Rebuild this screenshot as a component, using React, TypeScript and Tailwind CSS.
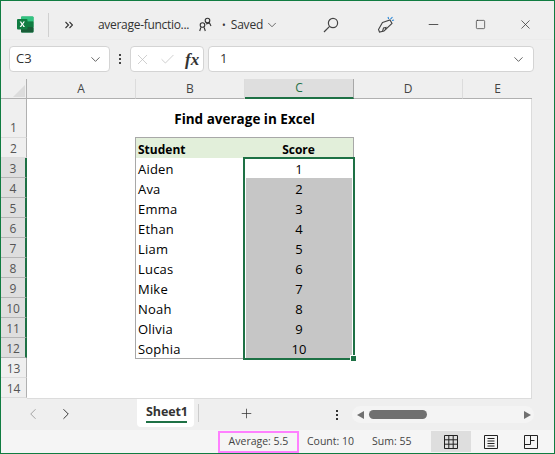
import React from "react";
import { ChevronDown, X, Check, Plus, ChevronLeft, ChevronRight, Minus, Square } from "lucide-react";

const ui = { fontFamily: '"Open Sans", "Noto Sans", sans-serif' };
const rows: [string, string][] = [
  ["Aiden", "1"], ["Ava", "2"], ["Emma", "3"], ["Ethan", "4"], ["Liam", "5"],
  ["Lucas", "6"], ["Mike", "7"], ["Noah", "8"], ["Olivia", "9"], ["Sophia", "10"],
];

function ExcelLogo() {
  return (
    <svg width="17" height="17" viewBox="0 0 17 17">
      <rect x="4" y="0.5" width="12.5" height="16" rx="1" fill="#21a366" />
      <rect x="4" y="0.5" width="12.5" height="5" rx="1" fill="#33c481" />
      <rect x="10" y="5.5" width="6.5" height="5.5" fill="#107c41" />
      <rect x="4" y="11" width="12.5" height="5.5" rx="1" fill="#185c37" />
      <rect x="0" y="3" width="10.5" height="10.5" rx="1" fill="#107c41" />
      <path d="M2.6 5.4h1.6l1.1 2 1.1-2h1.5L6.1 8.2l1.9 2.9H6.4L5.3 9.1l-1.1 2H2.6l1.9-2.9z" fill="#fff" />
    </svg>
  );
}

function Party() {
  return (
    <svg width="18" height="18" viewBox="0 0 18 18" fill="none" stroke="#444" strokeWidth="1.1">
      <path d="M5.5 6.5 L13 4 L15 7.5 L7 15 L2.5 16 L1.5 13.5 Z" />
      <path d="M5.5 15.5 L6.5 12 L9 11.5 L8.5 13.5" />
      <path d="M11 1 L11.7 3 M15.5 1 L13.5 3.2 M17 4 L15 4.5" stroke="#2b88d8" />
    </svg>
  );
}

function ColHead({ label, active, w, last }: { label: string; active?: boolean; w: string; last?: boolean }) {
  return (
    <div className={`${w} flex items-center justify-center text-[12px] ${active ? "bg-[#dedede] border-b-2 border-b-[#1e7145] text-[#1e7145] border-r border-r-[#a8a8a8]" : "border-b border-b-[#b0b0b0] text-[#444]"} ${last || active ? "" : "border-r border-r-[#dcdcdc]"}`}>
      {label}
    </div>
  );
}

function RowHead({ n, active, tall }: { n: number; active?: boolean; tall?: boolean }) {
  return (
    <div className={`${tall ? "h-[39px] items-end" : "h-5 items-center pt-[2px]"} flex justify-center text-[12px] text-[#555] border-b ${active ? "bg-[#dedede] border-b-[#b5b5b5] border-r-2 border-r-[#1e7145]" : "border-b-[#dcdcdc] border-r border-r-[#b0b0b0]"}`}>
      {n}
    </div>
  );
}

export default function App() {
  return (
    <div className="w-[555px] h-[454px] overflow-hidden border border-[#107c41] bg-[#efefef] flex flex-col text-[#333]" style={ui}>
      {/* Title bar */}
      <div className="h-[39px] shrink-0 flex items-center pt-[9px] border-b border-[#ebebeb] text-[12px] text-[#333]">
        <div className="ml-[16px] w-[17px]"><ExcelLogo /></div>
        <div className="ml-[14px] h-[24px] w-px bg-[#d0d0d0]" />
        <svg className="ml-[16px]" width="8" height="8" viewBox="0 0 8 8" fill="none" stroke="#333" strokeWidth="1.1">
          <path d="M.5 1l3 3-3 3M4.5 1l3 3-3 3" />
        </svg>
        <span className="ml-[25px] w-[94px] whitespace-nowrap tracking-[-0.3px]">average-functio...</span>
        <svg className="ml-[7px]" width="14" height="15" viewBox="0 0 14 15" fill="none" stroke="#333" strokeWidth="1.1">
          <circle cx="8.5" cy="3.5" r="2.3" /><circle cx="3.5" cy="8" r="2.3" />
          <path d="M.7 14 L1.8 10.5 M5.2 10.5 L6.3 14 M7 7 L10.5 6 L12 9" />
        </svg>
        <span className="ml-[9px] text-[10px] leading-none">•</span>
        <span className="ml-[5px] w-[31px] tracking-[-0.2px]">Saved</span>
        <ChevronDown size={14} strokeWidth={1.2} className="ml-[3px]" />
        <svg className="ml-[44px]" width="16" height="16" viewBox="0 0 16 16" fill="none" stroke="#444" strokeWidth="1.2">
          <circle cx="10" cy="6" r="4.6" /><path d="M6.6 9.4 L1 15" />
        </svg>
        <div className="ml-[38px]"><Party /></div>
        <Minus size={15} strokeWidth={1.3} className="ml-[31px]" />
        <Square size={11} strokeWidth={1.5} className="ml-[34px]" />
        <X size={15} strokeWidth={1.2} className="ml-[32px]" />
      </div>

      {/* Formula bar */}
      <div className="h-[39px] shrink-0 flex items-start pt-[6px] pl-[8px] pr-[4px] text-[13px]">
        <div className="w-[101px] h-[26px] bg-white border border-[#d4d4d4] rounded-[4px] flex items-center justify-between pl-[6px] pr-[6px]">
          <span>C3</span><ChevronDown size={15} strokeWidth={1.2} />
        </div>
        <div className="w-[20px] h-[26px] flex flex-col items-center justify-center gap-[2px]">
          <i className="block w-[2px] h-[2px] bg-[#444]" /><i className="block w-[2px] h-[2px] bg-[#444]" /><i className="block w-[2px] h-[2px] bg-[#444]" />
        </div>
        <div className="w-[74px] h-[26px] bg-white border border-[#d4d4d4] rounded-[4px] flex items-center pl-[3px] text-[#bdbdbd]">
          <X size={17} strokeWidth={1} /><Check size={17} strokeWidth={1} className="ml-[8px]" />
          <span className="ml-[9px] text-[#333] italic font-semibold text-[17px] leading-none" style={{ fontFamily: '"Liberation Serif", serif' }}>fx</span>
        </div>
        <div className="ml-[4px] w-[326px] h-[26px] bg-white border border-[#d4d4d4] rounded-[4px] flex items-center justify-between pl-[11px] pr-[7px]">
          <span>1</span><ChevronDown size={15} strokeWidth={1.2} />
        </div>
      </div>

      {/* Sheet */}
      <div className="h-[320px] shrink-0 flex flex-col">
        <div className="h-[20px] shrink-0 flex">
          <div className="w-[26px] border-b border-r border-[#b0b0b0] relative overflow-hidden">
            <div className="absolute right-[1px] bottom-[1px] w-0 h-0 border-l-[12px] border-l-transparent border-b-[12px] border-b-[#dcdcdc]" />
          </div>
          <ColHead label="A" w="w-[109px]" />
          <ColHead label="B" w="w-[109px]" />
          <ColHead label="C" w="w-[109px]" active />
          <ColHead label="D" w="w-[109px]" />
          <ColHead label="E" w="w-[69px]" last />
        </div>
        <div className="flex flex-1">
          <div className="w-[26px] shrink-0 flex flex-col">
            <RowHead n={1} tall />
            <RowHead n={2} />
            {rows.map((_, i) => <RowHead key={i} n={i + 3} active />)}
            <RowHead n={13} />
            <RowHead n={14} />
          </div>
          <div className="w-[505px] h-[300px] bg-white border-r border-b border-[#dcdcdc] flex flex-col" style={{ fontFamily: '"Open Sans", sans-serif' }}>
            <div className="h-[38px] shrink-0 ml-[108px] w-[219px] flex items-center justify-center pt-[2px] text-[13.5px] font-bold text-black">Find average in Excel</div>
            <div className="ml-[108px] w-[219px] relative border border-[#a8a8a8] text-[13px] text-black">
              <div className="h-[20px] flex items-center bg-[#e2efda] font-bold text-[12px] pt-[4px]">
                <div className="w-[108px] pl-[2px]">Student</div>
                <div className="flex-1 text-center">Score</div>
              </div>
              {rows.map(([n, s], i) => (
                <div key={n} className="h-[20px] flex items-center">
                  <div className="w-[108px] pl-[2px] pt-[3px] tracking-[0.2px]">{n}</div>
                  <div className={`flex-1 h-full flex items-center justify-center pt-[4px] ml-[2px] mr-[1px] ${i === 0 ? "" : "bg-[#c6c6c6]"}`}>{s}</div>
                </div>
              ))}
              <div className="absolute left-[107px] top-[19px] w-[112px] h-[203px] border-2 border-[#1e7145] pointer-events-none" />
              <div className="absolute left-[214px] top-[217px] w-[5px] h-[5px] bg-[#1e7145] border border-white box-content" />
            </div>
          </div>
        </div>
      </div>

      {/* Tabs */}
      <div className="h-[31px] shrink-0 flex items-start text-[13px]">
        <ChevronLeft size={18} strokeWidth={1.3} className="ml-[23px] mt-[6px] text-[#a0a0a0]" />
        <ChevronRight size={18} strokeWidth={1.3} className="ml-[15px] mt-[6px] text-[#333]" />
        <div className="ml-[62px] w-[57px] h-[28px] bg-white rounded-b-[4px] flex flex-col items-center pl-[3px]">
          <span className="font-bold text-[12.5px] text-[#333] mt-[3px] leading-[19px] tracking-[-0.1px]">Sheet1</span>
          <i className="block w-[41px] h-[2px] bg-[#1e7145] -ml-[1px]" />
        </div>
        <div className="ml-[4px] w-px h-[18px] mt-[5px] bg-[#ccc]" />
        <Plus size={15} strokeWidth={1.2} className="ml-[40px] mt-[7px]" />
        <div className="ml-[82px] mt-[11px] flex flex-col gap-[2px]">
          <i className="block w-[2px] h-[2px] bg-[#333]" /><i className="block w-[2px] h-[2px] bg-[#333]" /><i className="block w-[2px] h-[2px] bg-[#333]" />
        </div>
        <div className="ml-[14px] mt-[7px] w-[182px] h-[17px] rounded-full bg-[#f4f4f4] flex items-center pl-[5px] pr-[3px] justify-between">
          <i className="block border-y-[4px] border-y-transparent border-r-[7px] border-r-[#707070]" />
          <i className="block ml-[5px] mr-auto w-[58px] h-[9px] rounded-full bg-[#707070]" />
          <i className="block border-y-[4px] border-y-transparent border-l-[7px] border-l-[#707070]" />
        </div>
      </div>

      {/* Status bar */}
      <div className="flex-1 bg-[#f5f5f5] flex items-center text-[10.5px] text-[#444]">
        <div className="ml-[217px] h-[22px] w-[81px] border-2 border-[#ff80ff] flex items-center justify-center whitespace-nowrap">Average: 5.5</div>
        <span className="ml-[8px] w-[65px]">Count: 10</span>
        <span className="w-[59px]">Sum: 55</span>
        <div className="w-[40px] h-[21px] bg-[#dedede] flex items-center justify-center">
          <svg className="-ml-[1px]" width="14" height="14" viewBox="0 0 14 14" fill="none" stroke="#222"><path d="M.5.5h13v13H.5zM.5 4.8h13M.5 9.2h13M4.8.5v13M9.2.5v13" /></svg>
        </div>
        <div className="w-[40px] flex items-center justify-center">
          <svg className="-ml-[1px]" width="14" height="14" viewBox="0 0 14 14" fill="none" stroke="#222"><path d="M.5.5h13v13H.5zM3.5 3.5h7M3.5 6h7M3.5 8.5h7M3.5 11h7" /></svg>
        </div>
        <div className="w-[40px] flex items-center justify-center">
          <svg className="-ml-[1px]" width="14" height="14" viewBox="0 0 14 14" fill="none" stroke="#222"><path d="M.5.5h13v13H.5zM.5 9.5h6V.5M6.5 5.5h4" /></svg>
        </div>
      </div>
    </div>
  );
}
